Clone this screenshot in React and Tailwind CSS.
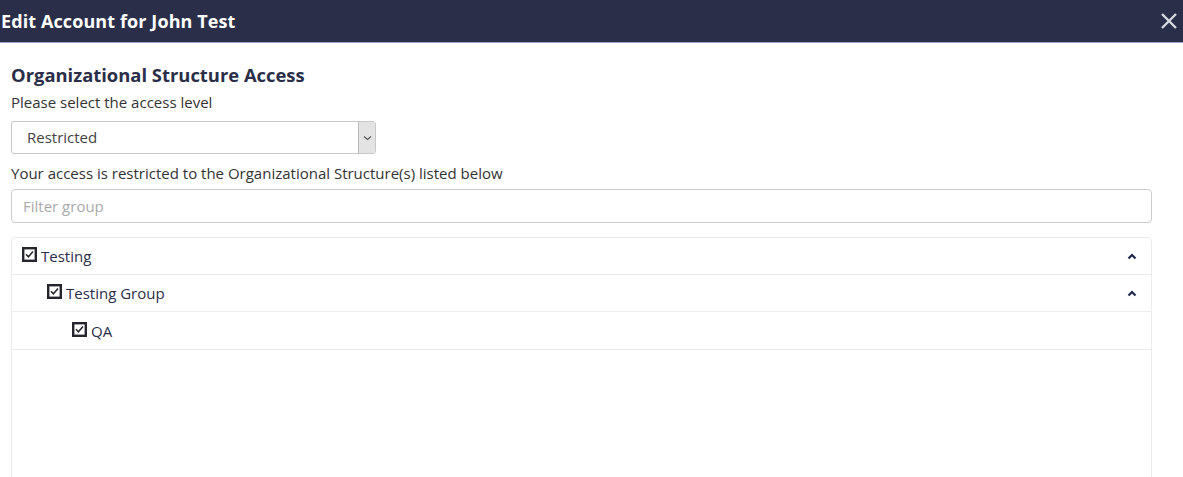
import React from "react";

const font = { fontFamily: '"Open Sans", "Liberation Sans", sans-serif' };

function Check() {
  return (
    <svg width="15" height="15" viewBox="0 0 15 15" className="shrink-0">
      <rect x="1.2" y="1.2" width="12.6" height="12.6" fill="white" stroke="#25252d" strokeWidth="2.4" />
      <path d="M4 7.3 L6.4 9.8 L11 4.6" fill="none" stroke="#25252d" strokeWidth="1.5" />
    </svg>
  );
}

function ChevronUp() {
  return (
    <svg width="10" height="7" viewBox="0 0 10 7">
      <path d="M1.5 5.5 L5 2 L8.5 5.5" fill="none" stroke="#1f2a4a" strokeWidth="2.2" />
    </svg>
  );
}

function Row({ level, label, chevron, h }) {
  const pad = ["pl-[10px]", "pl-[35px]", "pl-[60px]"][level];
  return (
    <div className={`flex ${h} items-center border-b border-[#ececec] ${pad} pr-[14px]`}>
      <div className="flex items-center gap-[4px] -mt-[3px]">
        <Check />
        <span className="text-[15px] text-[#2a2e48] mt-[4px]">{label}</span>
      </div>
      <div className="flex-1" />
      {chevron && <ChevronUp />}
    </div>
  );
}

export default function App() {
  return (
    <div className="w-[1183px] h-[477px] overflow-hidden bg-white" style={font}>
      <div className="h-[43px] bg-[#2a2e48] flex items-center justify-between border-b border-[#9aa3c7]">
        <div className="text-white font-bold text-[18px] pl-[1px] tracking-[0.1px]">Edit Account for John Test</div>
        <svg width="18" height="18" viewBox="0 0 18 18" className="mr-[5px]">
          <path d="M2 2 L16 16 M16 2 L2 16" stroke="#d8d9de" strokeWidth="2.4" />
        </svg>
      </div>
      <div className="px-[11px] pr-[31px]">
        <div className="mt-[19px] text-[18.4px] font-bold text-[#2a2e48] leading-[25px]">Organizational Structure Access</div>
        <div className="mt-[5px] text-[15px] text-[#333] leading-[20px]">Please select the access level</div>
        <div className="mt-[9px] w-[365px] h-[33px] border border-[#c8c8c8] rounded-[3px] flex items-stretch">
          <div className="flex-1 flex items-center pl-[15px] text-[15px] text-[#444]">Restricted</div>
          <div className="w-[17px] bg-[#e3e3e3] border-l border-[#bbb] flex items-center justify-center">
            <svg width="9" height="6" viewBox="0 0 9 6">
              <path d="M1 1.5 L4.5 4.5 L8 1.5" fill="none" stroke="#555" strokeWidth="1.1" />
            </svg>
          </div>
        </div>
        <div className="mt-[9px] text-[15px] text-[#333] leading-[20px]">Your access is restricted to the Organizational Structure(s) listed below</div>
        <div className="mt-[6px] h-[34px] border border-[#ccc] rounded-[4px] flex items-center pl-[11px] text-[15px] text-[#aaa]">Filter group</div>
        <div className="mt-[14px] border border-[#ececec] rounded-t-[4px] h-[260px]">
          <Row level={0} label="Testing" chevron h="h-[37px]" />
          <Row level={1} label="Testing Group" chevron h="h-[37px]" />
          <Row level={2} label="QA" h="h-[38px]" />
        </div>
      </div>
    </div>
  );
}
